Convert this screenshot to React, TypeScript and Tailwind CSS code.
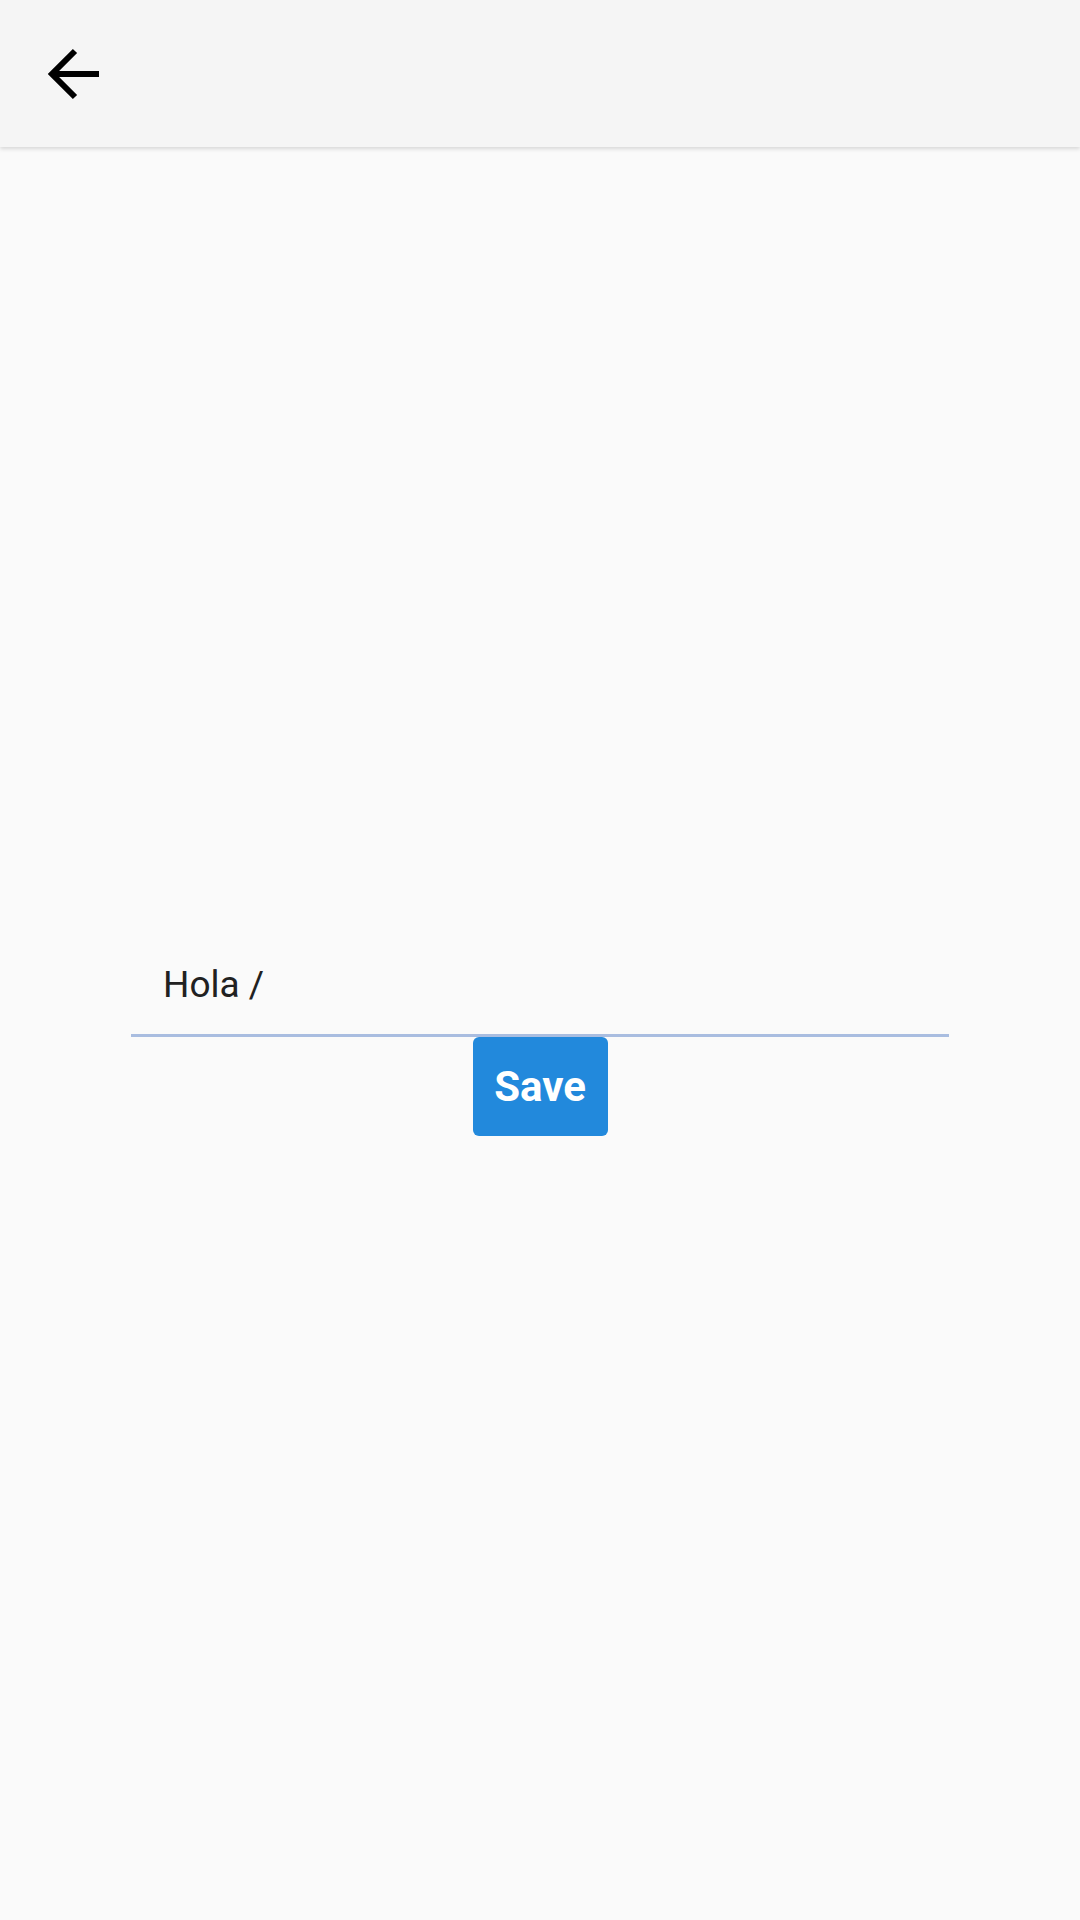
export default function App() {
	return (
		<div className="min-h-screen flex flex-col bg-[#fafafa] font-['Roboto',sans-serif]">
			{/* Top bar */}
			<header className="h-[147px] shrink-0 bg-[#f5f5f5] shadow-[0_2px_4px_rgba(0,0,0,0.14)] relative z-10 flex items-center">
				<button className="ml-[36px] w-[72px] h-[72px] flex items-center justify-center">
					<svg viewBox="36 36 72 72" width="72" height="72" fill="none" stroke="#000" strokeWidth="6">
						<path d="M52 72H99" />
						<path d="M75 49L52 72L75 95" strokeLinecap="butt" />
					</svg>
				</button>
			</header>

			{/* Form */}
			<main className="flex-1 flex flex-col items-center justify-center">
				<div className="w-[818px] h-[106px] flex items-end border-b-[3px] border-[#a9bde0] pl-[32px] pb-[31px]">
					<span className="text-[37px] leading-[37px] text-[#212121]">Hola /</span>
				</div>
				<button className="w-[135px] h-[99px] rounded-[6px] bg-[#2289dc] text-white font-bold text-[42px] leading-[42px] flex items-center justify-center">
					Save
				</button>
			</main>
		</div>
	);
}
